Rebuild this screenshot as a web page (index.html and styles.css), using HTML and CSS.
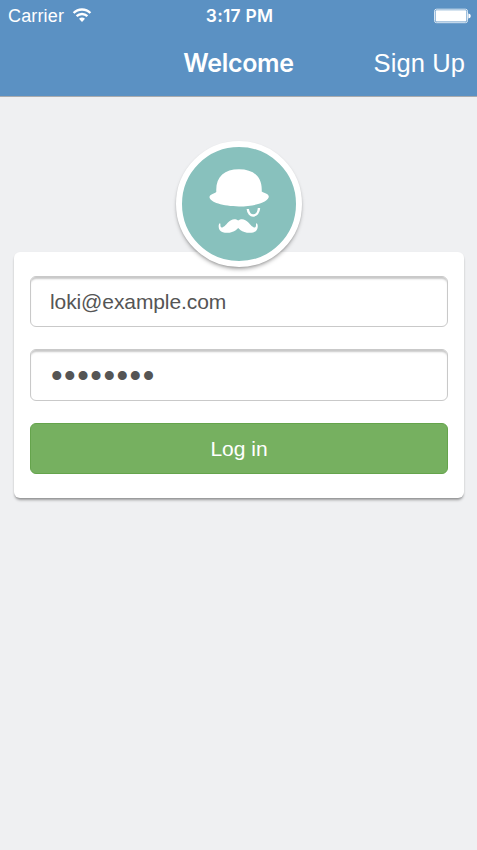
FILE: index.html
```
<!DOCTYPE html>
<html lang="en">
<head>
<meta charset="utf-8">
<title>Welcome</title>
<link rel="stylesheet" href="styles.css">
</head>
<body>
<header class="header">
  <div class="status">
    <div class="carrier"><span>Carrier</span>
      <svg class="wifi" width="20" height="16" viewBox="0 0 20 16" fill="none" stroke="#fff" stroke-width="2.4"><path d="M1.6 6C6.2 1.4 13.8 1.4 18.4 6M4.6 9.2C7.7 6.2 12.3 6.2 15.4 9.2"/><path d="M7 11.8Q10 9.3 13 11.8L10 14.9Z" fill="#fff" stroke="none"/></svg>
    </div>
    <div class="time">3:17 PM</div>
    <svg class="battery" width="38" height="16" viewBox="0 0 38 16"><rect x="1.5" y="1.2" width="33" height="13.5" rx="2" fill="none" stroke="#dce8f3" stroke-width="1"/><rect x="2.6" y="2.3" width="30.8" height="11.3" rx="1" fill="#fff"/><path d="M35.4 5.4Q37.8 5.8 37.8 7.9T35.4 10.4Z" fill="#fff"/></svg>
  </div>
  <nav class="nav">
    <h1 class="title">Welcome</h1>
    <a class="signup">Sign Up</a>
  </nav>
</header>
<main class="main">
  <div class="avatar">
    <svg width="114" height="114" viewBox="0 0 114 114" fill="#fff">
      <path d="M34.3 45C33.5 30 42 22.2 57 22.2S80.5 30 79.7 44.5C83 46.5 86.8 47 86.8 49.5C87 55 73 59.5 57 59.5S27.3 55 27.5 50C28 47 31.5 47 34.3 45Z"/>
      <path d="M65.8 62C66.4 71 76.5 70.5 77 61" fill="none" stroke="#fff" stroke-width="2.4"/>
      <path d="M56.2 73.6C53 71 48.8 72.3 46 75.5C43.5 78.5 39.5 82.5 38.6 79.5C38.1 78 38.8 76.7 38 76.3C36.4 76.7 36 81 38 83.5C40 86 46 86.5 50 85C53 84 55 82.5 56.2 81C57.4 82.5 59.4 84 62.4 85C66.4 86.5 72.4 86 74.4 83.5C76.4 81 76 76.7 74.4 76.3C73.6 76.7 74.3 78 73.8 79.5C72.9 82.5 68.9 78.5 66.4 75.5C63.6 72.3 59.4 71 56.2 73.6Z"/>
    </svg>
  </div>
  <form class="card">
    <input class="field" type="text" value="loki@example.com" aria-label="Email">
    <input class="field password" type="password" value="password" aria-label="Password">
    <button class="login" type="button">Log in</button>
  </form>
</main>
</body>
</html>
```
FILE: styles.css
```
* { box-sizing: border-box; }
body {
  margin: 0;
  min-height: 850px;
  background: #eff0f2;
  font-family: "Liberation Sans", Arial, sans-serif;
  color: #fff;
}
.header {
  height: 97px;
  background: #5b91c3;
  border-bottom: 1px solid #a9abae;
}
.status, .nav {
  display: grid;
  grid-template-columns: 1fr auto 1fr;
  align-items: center;
}
.status { height: 32px; padding: 0 6px 0 8px; }
.carrier { display: flex; align-items: center; gap: 8px; font-size: 18px; letter-spacing: .15px; }
.wifi { margin-bottom: 2px; }
.time { font: 600 17.4px/20px Inter, sans-serif; letter-spacing: .25px; }
.battery { justify-self: end; }
.nav { height: 63px; padding: 0 12px; }
.title { grid-column: 2; margin: 0 0 2px; font: 600 25px/32px Inter, sans-serif; letter-spacing: -.3px; }
.signup { justify-self: end; font-size: 25.5px; letter-spacing: .1px; }
.main { padding: 44px 13px 0 14px; }
.avatar {
  position: relative;
  width: 126px;
  height: 126px;
  margin: 0 auto -15px;
  border: 6px solid #fff;
  border-radius: 50%;
  background: #88c1bd;
  box-shadow: 0 3px 4px -1px rgba(0, 0, 0, .35), 0 1px 2px rgba(0, 0, 0, .1);
}
.avatar svg { display: block; }
.card {
  display: flex;
  flex-direction: column;
  gap: 22px;
  height: 246px;
  padding: 24px 16px;
  border-radius: 6px;
  background: #fff;
  box-shadow: 0 3px 3px -1px rgba(0, 0, 0, .35), 0 1px 2px rgba(0, 0, 0, .1);
}
.field {
  width: 100%;
  height: 51.3px;
  padding: 0 18px 0 19px;
  border: 1.5px solid #c9c9c9;
  border-radius: 6px;
  background: #fff;
  box-shadow: inset 0 3px 2px -1px rgba(0, 0, 0, .22);
  color: #555;
  font: 21px "Liberation Sans", Arial, sans-serif;
  letter-spacing: -.1px;
  outline: none;
}
.password { padding: 2px 18px 0 20px; font-size: 33px; letter-spacing: 1.55px; }
.login {
  height: 51px;
  padding: 2px 0 0;
  border: 1.5px solid #65a44c;
  border-radius: 6px;
  background: #76b060;
  color: #fff;
  font: 21px "Liberation Sans", Arial, sans-serif;
}
```
